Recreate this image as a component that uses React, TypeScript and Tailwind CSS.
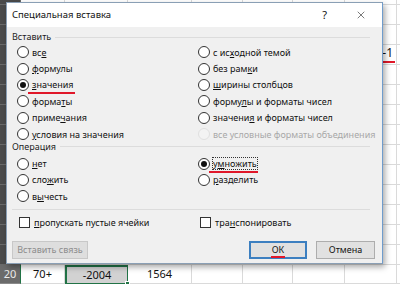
import { X } from 'lucide-react'

const cols = [21, 44, 63, 64, 51, 50, 52, 52, 40]

function Radio({ checked = false, disabled = false }: { checked?: boolean; disabled?: boolean }) {
  return (
    <span
      className={`flex size-[12px] shrink-0 items-center justify-center rounded-full border ${
        disabled ? 'border-[#e0e0e0] bg-[#f3f3f3]' : 'border-[#333] bg-white'
      }`}
    >
      {checked && <span className="size-[6px] rounded-full bg-[#111]" />}
    </span>
  )
}

function Opt({
  label,
  k,
  checked,
  disabled,
  focus,
  mark,
}: {
  label: string
  k?: number
  checked?: boolean
  disabled?: boolean
  focus?: boolean
  mark?: boolean
}) {
  const parts =
    k === undefined
      ? [label]
      : [label.slice(0, k), label.slice(k, k + 1), label.slice(k + 1)]
  return (
    <div className="flex h-[16.4px] items-center gap-[3px] whitespace-nowrap">
      <Radio checked={checked} disabled={disabled} />
      <span
        className={`relative leading-[11px] ${disabled ? 'text-[#a8a8a8]' : 'text-[#111]'} ${
          focus ? 'outline outline-1 outline-dotted outline-[#333]' : ''
        }`}
      >
        {parts.length === 1 ? (
          label
        ) : (
          <>
            {parts[0]}
            <span className="underline underline-offset-1">{parts[1]}</span>
            {parts[2]}
          </>
        )}
        {mark && <span className="absolute -left-[4px] -right-[1px] -bottom-[4px] h-[2px] bg-[#e0182a]" />}
      </span>
    </div>
  )
}

function Section({ title }: { title: string }) {
  return (
    <div className="flex h-[16px] shrink-0 items-center gap-[4px] pr-[12px] text-[#1e1e1e]">
      <span>{title}</span>
      <span className="h-px flex-1 bg-[#dcdcdc]" />
    </div>
  )
}

function Check({ label, k }: { label: string; k: number }) {
  return (
    <div className="flex h-[12px] items-center gap-[4px] whitespace-nowrap">
      <span className="size-[11px] shrink-0 border border-[#333] bg-white" />
      <span className="text-[#111]">
        {label.slice(0, k)}
        <span className="underline underline-offset-1">{label.slice(k, k + 1)}</span>
        {label.slice(k + 1)}
      </span>
    </div>
  )
}

function Sheet() {
  const rows = [5, ...Array(13).fill(20), 19]
  return (
    <div className="flex h-[284px] w-[400px] flex-col overflow-hidden bg-white">
      {rows.map((h, r) => {
        const last = r === rows.length - 1
        return (
          <div key={r} className="flex shrink-0" style={{ height: h }}>
            {cols.map((w, c) => (
              <div
                key={c}
                className={`flex shrink-0 items-center justify-center border-b border-r text-[11px] ${
                  c === 0
                    ? last
                      ? 'border-[#8a8a8a] border-r-[#217346] bg-[#6b6b6b] text-[#ececec]'
                      : 'border-[#6a6a6a] bg-[#4b4b4b]'
                    : last && c === 2
                    ? 'relative border-2 border-[#217346] bg-[#d2d2d2] text-[#111]'
                    : 'border-[#dadada] text-[#111]'
                }`}
                style={{ width: w }}
              >
                {last && c === 0 && '20'}
                {last && c === 1 && '70+'}
                {last && c === 2 && (
                  <>
                    -2004
                    <span className="absolute -bottom-[3px] -right-[3px] size-[5px] border border-white bg-[#217346]" />
                  </>
                )}
                {last && c === 3 && '1564'}
                {r === 3 && c === 7 && (
                  <span className="relative ml-auto mr-[3px] mb-[5px] mt-auto text-[12px] leading-[12px] text-[#111]">
                    -1
                    <span className="absolute -left-[3px] -right-[2px] -bottom-[4px] h-[2px] bg-[#e0182a]" />
                  </span>
                )}
              </div>
            ))}
          </div>
        )
      })}
    </div>
  )
}

export default function App() {
  return (
    <div className="relative h-[284px] w-[400px] overflow-hidden font-['Noto_Sans',sans-serif] text-[9px]">
      <Sheet />
      <div className="absolute left-[6px] top-[2px] flex h-[262px] w-[377px] flex-col overflow-hidden border border-[#8a9fb5] border-r-[#6f9ccc] bg-[#f0f0f0] shadow-[2px_3px_6px_rgba(0,0,0,0.35)]">
        <div className="flex h-[24px] shrink-0 items-center bg-white pl-[5px] text-[9.5px] text-[#111]">
          <span className="flex-1">Специальная вставка</span>
          <span className="mr-[28px] text-[11px]">?</span>
          <X className="mr-[15px] size-[12px] text-[#222]" strokeWidth={1.2} />
        </div>
        <div className="flex flex-1 flex-col pl-[5px]">
          <div className="mt-[2px]">
            <Section title="Вставить" />
          </div>
          <div className="-mt-[1px] grid grid-cols-[181px_1fr] pl-[5px]">
            <div className="flex flex-col">
              <Opt label="все" k={2} />
              <Opt label="формулы" k={0} />
              <Opt label="значения" k={0} checked mark />
              <Opt label="форматы" k={5} />
              <Opt label="примечания" k={5} />
              <Opt label="условия на значения" k={0} />
            </div>
            <div className="flex flex-col">
              <Opt label="с исходной темой" k={4} />
              <Opt label="без рамки" k={7} />
              <Opt label="ширины столбцов" k={0} />
              <Opt label="формулы и форматы чисел" k={5} />
              <Opt label="значения и форматы чисел" k={7} />
              <Opt label="все условные форматы объединения" disabled />
            </div>
          </div>
          <div className="-mt-[4px]">
            <Section title="Операция" />
          </div>
          <div className="mt-[1px] grid grid-cols-[181px_1fr] pl-[5px]">
            <div className="flex flex-col">
              <Opt label="нет" k={0} />
              <Opt label="сложить" k={3} />
              <Opt label="вычесть" k={1} />
            </div>
            <div className="flex flex-col">
              <Opt label="умножить" k={1} checked focus mark />
              <Opt label="разделить" k={0} />
            </div>
          </div>
          <div className="mr-[12px] mt-[4px] h-px shrink-0 bg-[#dcdcdc]" />
          <div className="mt-[7px] grid grid-cols-[181px_1fr] pl-[7px]">
            <Check label="пропускать пустые ячейки" k={0} />
            <Check label="транспонировать" k={3} />
          </div>
          <div className="mt-[12px] flex items-center pr-[7px]">
            <button className="h-[18px] w-[76px] border border-[#c8c8c8] bg-[#dedede] text-[#8c8c8c]">
              Вставить связь
            </button>
            <span className="flex-1" />
            <button className="h-[18px] w-[58px] border-2 border-[#3c7fc0] bg-[#e1e1e1] text-[#111]">
              <span className="relative">
                ОК
                <span className="absolute -left-[1px] -right-[1px] -bottom-[2px] h-[2px] bg-[#e0182a]" />
              </span>
            </button>
            <button className="ml-[9px] h-[18px] w-[59px] border border-[#adadad] bg-[#e1e1e1] text-[#111]">
              Отмена
            </button>
          </div>
        </div>
      </div>
    </div>
  )
}
